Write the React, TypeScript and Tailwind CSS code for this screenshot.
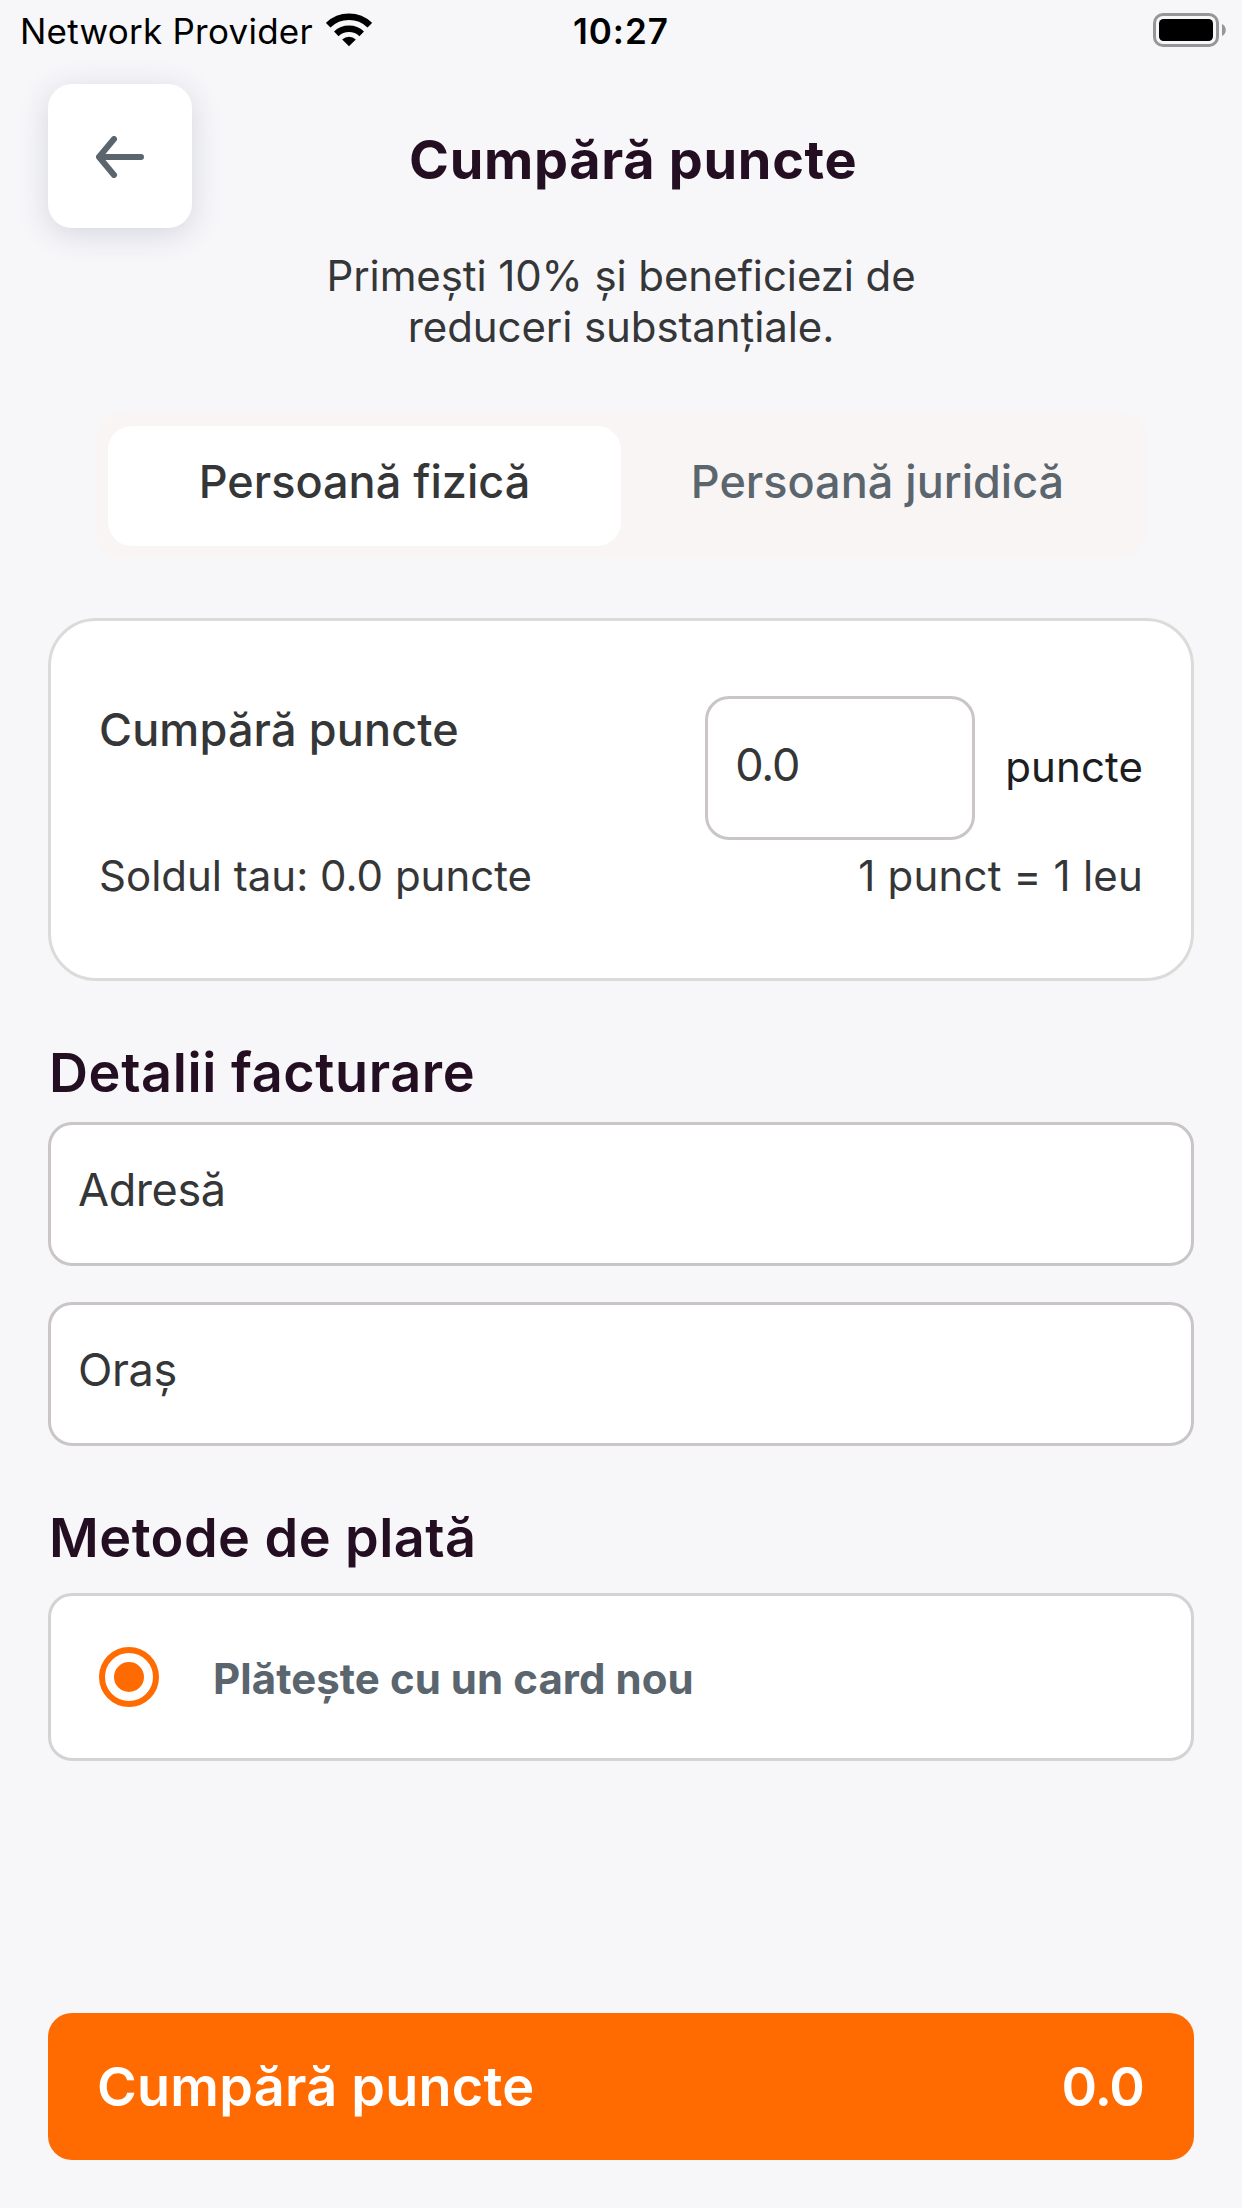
import { useState } from 'react'

type PersonType = 'fizica' | 'juridica'

const tabs: { id: PersonType; label: string }[] = [
  { id: 'fizica', label: 'Persoană fizică' },
  { id: 'juridica', label: 'Persoană juridică' },
]

export default function App() {
  const [personType, setPersonType] = useState<PersonType>('fizica')
  const [points, setPoints] = useState('0.0')
  const [address, setAddress] = useState('')
  const [city, setCity] = useState('')

  return (
    <div className="flex h-[2208px] w-[1242px] flex-col overflow-hidden bg-[#f7f7fa] font-['Inter',sans-serif] text-[#353637]">
      <StatusBar />

      <main className="flex flex-1 flex-col px-12 pt-[21px] pb-12">
        <header className="flex h-36 items-center">
          <button className="flex h-36 w-36 items-center justify-center rounded-3xl bg-white pt-0.5 shadow-[0_6px_30px_rgba(50,54,84,0.17)]">
            <BackIcon />
          </button>
          <h1 className="ml-[217px] pt-[8px] text-[54px] leading-[66px] font-[650] tracking-[0.7px] text-[#240f22]">Cumpără puncte</h1>
        </header>

        <p className="mt-[22px] text-center text-[42px] leading-[51px] tracking-[-0.1px]">
          Primești 10% și beneficiezi de
          <br />
          reduceri substanțiale.
        </p>

        <div className="mx-12 mt-[61px] flex h-[145px] rounded-3xl bg-[#f9f5f4] px-3 pt-[13px] pb-3">
          {tabs.map((tab) => (
            <button
              key={tab.id}
              onClick={() => setPersonType(tab.id)}
              className={
                personType === tab.id
                  ? 'flex-1 rounded-3xl bg-white pb-[8px] text-[45px] font-medium text-[#353637]'
                  : 'flex-1 rounded-3xl pb-[8px] text-[45px] font-medium text-[#5a656e]'
              }
            >
              {tab.label}
            </button>
          ))}
        </div>

        <section className="mt-[60px] flex h-[363px] flex-col rounded-[48px] border-3 border-[#dcdbda] bg-white px-12 pt-[75px]">
          <div className="flex items-start">
            <h2 className="mt-[7px] flex-1 text-[45px] leading-[54px] font-medium tracking-[0.15px]">Cumpără puncte</h2>
            <input
              value={points}
              onChange={(event) => setPoints(event.target.value)}
              className="h-36 w-[270px] rounded-3xl border-3 border-[#cac5c7] bg-white px-[27px] pb-[8px] text-[45px] tracking-[-1.2px] outline-none"
            />
            <span className="ml-[30px] flex h-36 items-center pb-[3px] text-[42px] tracking-[0.1px] text-[#1c1e1f]">puncte</span>
          </div>
          <div className="mt-2.5 flex justify-between text-[42px] leading-[51px]">
            <span>Soldul tau: 0.0 puncte</span>
            <span className="tracking-[0.2px]">1 punct = 1 leu</span>
          </div>
        </section>

        <h2 className="mt-[59px] pl-px text-[54px] leading-[66px] font-[560] tracking-[0.6px] text-[#240f22]">Detalii facturare</h2>
        <div className="mt-[16px] flex flex-col gap-9">
          <Field placeholder="Adresă" value={address} onChange={setAddress} />
          <Field placeholder="Oraș" value={city} onChange={setCity} />
        </div>

        <h2 className="mt-[59px] pl-px text-[54px] leading-[66px] font-[560] tracking-[0.45px] text-[#240f22]">Metode de plată</h2>
        <div className="mt-[22px] flex h-[168px] items-center rounded-3xl border-3 border-[#d3d3d5] bg-white px-12">
          <span className="flex h-[60px] w-[60px] items-center justify-center rounded-full border-6 border-[#ff6b00]">
            <span className="h-[30px] w-[30px] rounded-full bg-[#ff6b00]" />
          </span>
          <span className="ml-[54px] pt-[3px] text-[42px] leading-[51px] font-bold tracking-[0.05px] text-[#5a656e]">
            Plătește cu un card nou
          </span>
        </div>

        <button className="mt-auto flex h-[147px] items-center justify-between rounded-3xl bg-[#ff6b00] pr-[50px] pl-[49px] text-[54px] font-[560] text-white">
          <span className="tracking-[0.25px]">Cumpără puncte</span>
          <span className="tracking-[-1px]">{points}</span>
        </button>
      </main>
    </div>
  )
}

function Field({ placeholder, value, onChange }: { placeholder: string; value: string; onChange: (value: string) => void }) {
  return (
    <input
      value={value}
      onChange={(event) => onChange(event.target.value)}
      placeholder={placeholder}
      className="h-36 w-full rounded-3xl border-3 border-[#cac5c7] bg-white px-[27px] pb-[9px] text-[45px] tracking-[-0.4px] outline-none placeholder:text-[#353637]"
    />
  )
}

function StatusBar() {
  return (
    <div className="grid h-[63px] grid-cols-[1fr_auto_1fr] items-center text-[35px] text-black">
      <div className="flex items-center gap-[13px] pl-5">
        <span className="tracking-[0.25px]">Network Provider</span>
        <WifiIcon />
      </div>
      <span className="font-semibold tracking-[1px]">10:27</span>
      <div className="flex justify-end pr-4">
        <BatteryIcon />
      </div>
    </div>
  )
}

function WifiIcon() {
  return (
    <svg width="46" height="34" viewBox="0 0 46 34" className="-mt-1">
      <path d="M2.2 12.2a30 30 0 0 1 41.6 0" fill="none" stroke="#000" strokeWidth="6.6" />
      <path d="M10.3 20.8a18.4 18.4 0 0 1 25.4 0" fill="none" stroke="#000" strokeWidth="6.6" />
      <path d="M16.2 26.4a10 10 0 0 1 13.6 0L23 33.2z" />
    </svg>
  )
}

function BatteryIcon() {
  return (
    <svg width="73" height="34" viewBox="0 0 73 34" className="-mt-[3px]">
      <rect x="1.5" y="1.5" width="63" height="31" rx="8.5" fill="none" stroke="#969698" strokeWidth="3" />
      <rect x="6" y="6" width="54" height="22" rx="4.5" />
      <path d="M69 11c5 2 5 10 0 12z" fill="#969698" />
    </svg>
  )
}

function BackIcon() {
  return (
    <svg width="48" height="42" viewBox="0 0 48 42" fill="none" stroke="#5a656e" strokeWidth="6" strokeLinecap="round" strokeLinejoin="round">
      <path d="M45 21H4M18 3L3 21l15 18" />
    </svg>
  )
}
